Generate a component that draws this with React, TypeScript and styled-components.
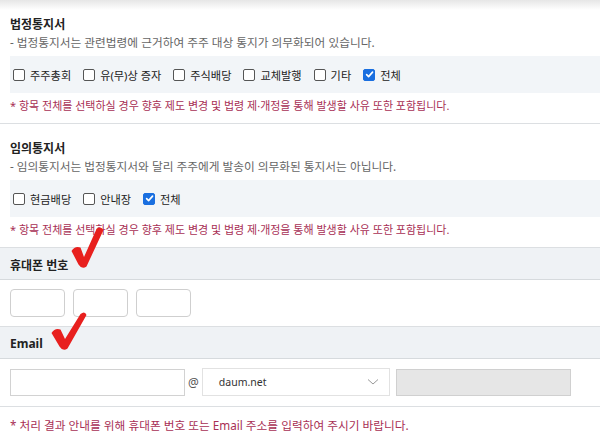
import styled, { createGlobalStyle } from 'styled-components';

const GlobalStyle = createGlobalStyle`
  html, body {
    margin: 0;
    padding: 0;
    background: #ffffff;
  }
  body {
    font-family: 'Noto Sans', 'Noto Sans CJK KR', sans-serif;
    color: #222;
  }
  * {
    box-sizing: border-box;
  }
`;

const Page = styled.div`
  position: relative;
  width: 600px;
  height: 436px;
  overflow: hidden;
  background: linear-gradient(to bottom, #e6e6e6 0, #ffffff 10px) no-repeat;
`;

const Section = styled.section`
  padding: 15px 0 9px 10px;
  border-bottom: 1px solid #dcdfe2;
`;

const Title = styled.h3`
  margin: 0;
  padding-top: 2px;
  font-size: 12px;
  font-weight: 700;
  line-height: 16px;
  color: #222;
`;

const Desc = styled.p`
  margin: 0 0 5px;
  font-size: 11.7px;
  line-height: 18px;
  color: #666;
`;

const CheckRow = styled.div`
  height: 37px;
  padding-left: 3px;
  display: flex;
  align-items: center;
  gap: 12px;
  background-color: #f2f5f8;
`;

const CheckItem = styled.label`
  display: flex;
  align-items: center;
  gap: 5px;
  font-size: 11.2px;
  color: #222;
`;

const Box = styled.span<{ $checked?: boolean }>`
  width: 12px;
  height: 12px;
  border-radius: 2px;
  display: inline-flex;
  align-items: center;
  justify-content: center;
  border: 1px solid ${(props) => (props.$checked ? '#1a6fe0' : '#555')};
  background-color: ${(props) => (props.$checked ? '#1a6fe0' : '#fff')};
`;

const Note = styled.p`
  margin: 5px 0 0;
  font-size: 11px;
  line-height: 16px;
  color: #a82f55;
`;

const Header = styled.div`
  height: 32px;
  padding: 2px 0 0 10px;
  display: flex;
  align-items: center;
  background-color: #eff2f5;
  border-bottom: 1px solid #d6dadd;
  font-size: 12px;
  font-weight: 700;
  color: #222;
`;

const Body = styled.div<{ $bottom?: number }>`
  padding: 9px 10px ${(props) => props.$bottom ?? 9}px;
  display: flex;
  align-items: center;
  gap: 8px;
  border-bottom: 1px solid #dcdfe2;
`;

const PhoneInput = styled.div`
  width: 55px;
  height: 28px;
  border: 1px solid #cfcfcf;
  border-radius: 4px;
  background: #fff;
`;

const EmailInput = styled.div`
  width: 175px;
  height: 27px;
  border: 1px solid #d2d2d2;
  background: #fff;
`;

const At = styled.span`
  font-size: 12px;
  color: #555;
  margin: 0 -5px 0 -5px;
`;

const Select = styled.div`
  width: 188px;
  height: 28px;
  padding: 0 10px 0 16px;
  display: flex;
  align-items: center;
  justify-content: space-between;
  border: 1px solid #e2e2e2;
  background: #fff;
  font-size: 10.5px;
  color: #333;
`;

const Disabled = styled.div`
  width: 175px;
  height: 27px;
  margin-left: -2px;
  border: 1px solid #d0d0d0;
  background: #e6e6e6;
`;

const BottomNote = styled.p`
  margin: 0;
  padding: 10px 0 0 10px;
  font-size: 11.7px;
  line-height: 16px;
  color: #a82f55;
`;

const Mark = styled.svg`
  position: absolute;
`;

function Check({ label, checked }: { label: string; checked?: boolean }) {
  return (
    <CheckItem>
      <Box $checked={checked}>
        {checked ? (
          <svg width="9" height="9" viewBox="0 0 10 10">
            <path
              d="M1.8 5.2 L4 7.4 L8.4 2.4"
              fill="none"
              stroke="#fff"
              strokeWidth="1.8"
              strokeLinecap="round"
              strokeLinejoin="round"
            />
          </svg>
        ) : null}
      </Box>
      {label}
    </CheckItem>
  );
}

const legal = ['주주총회', '유(무)상 증자', '주식배당', '교체발행', '기타'];
const optional = ['현금배당', '안내장'];

export default function App() {
  return (
    <>
      <GlobalStyle />
      <Page>
        <Section>
          <Title>법정통지서</Title>
          <Desc>- 법정통지서는 관련법령에 근거하여 주주 대상 통지가 의무화되어 있습니다.</Desc>
          <CheckRow>
            {legal.map((item) => (
              <Check key={item} label={item} />
            ))}
            <Check label="전체" checked />
          </CheckRow>
          <Note>* 항목 전체를 선택하실 경우 향후 제도 변경 및 법령 제·개정을 통해 발생할 사유 또한 포함됩니다.</Note>
        </Section>
        <Section>
          <Title>임의통지서</Title>
          <Desc>- 임의통지서는 법정통지서와 달리 주주에게 발송이 의무화된 통지서는 아닙니다.</Desc>
          <CheckRow>
            {optional.map((item) => (
              <Check key={item} label={item} />
            ))}
            <Check label="전체" checked />
          </CheckRow>
          <Note>* 항목 전체를 선택하실 경우 향후 제도 변경 및 법령 제·개정을 통해 발생할 사유 또한 포함됩니다.</Note>
        </Section>
        <Header>휴대폰 번호</Header>
        <Body>
          <PhoneInput />
          <PhoneInput />
          <PhoneInput />
        </Body>
        <Header>Email</Header>
        <Body $bottom={10}>
          <EmailInput />
          <At>@</At>
          <Select>
            daum.net
            <svg width="12" height="8" viewBox="0 0 12 8">
              <path d="M1 1.5 L6 6 L11 1.5" fill="none" stroke="#999" strokeWidth="1" />
            </svg>
          </Select>
          <Disabled />
        </Body>
        <BottomNote>* 처리 결과 안내를 위해 휴대폰 번호 또는 Email 주소를 입력하여 주시기 바랍니다.</BottomNote>

        <Mark width="36" height="44" viewBox="0 0 36 44" style={{ left: 70, top: 226 }}>
          <path
            d="M1.5 25 Q5 19.5 10.5 21.5 L14 31 L26.5 3 Q31 -0.5 33.5 4 L16.5 40.5 Q12 44 8.5 38.5 Z"
            fill="#e8201e"
          />
        </Mark>
        <Mark width="40" height="40" viewBox="0 0 40 40" style={{ left: 50, top: 311 }}>
          <path
            d="M1.5 22 Q5 16.5 10.5 18.5 L15 28 L30.5 3 Q35 -0.5 36.5 4 L17.5 37.5 Q13 41 9.5 35.5 Z"
            fill="#e8201e"
          />
        </Mark>
      </Page>
    </>
  );
}
